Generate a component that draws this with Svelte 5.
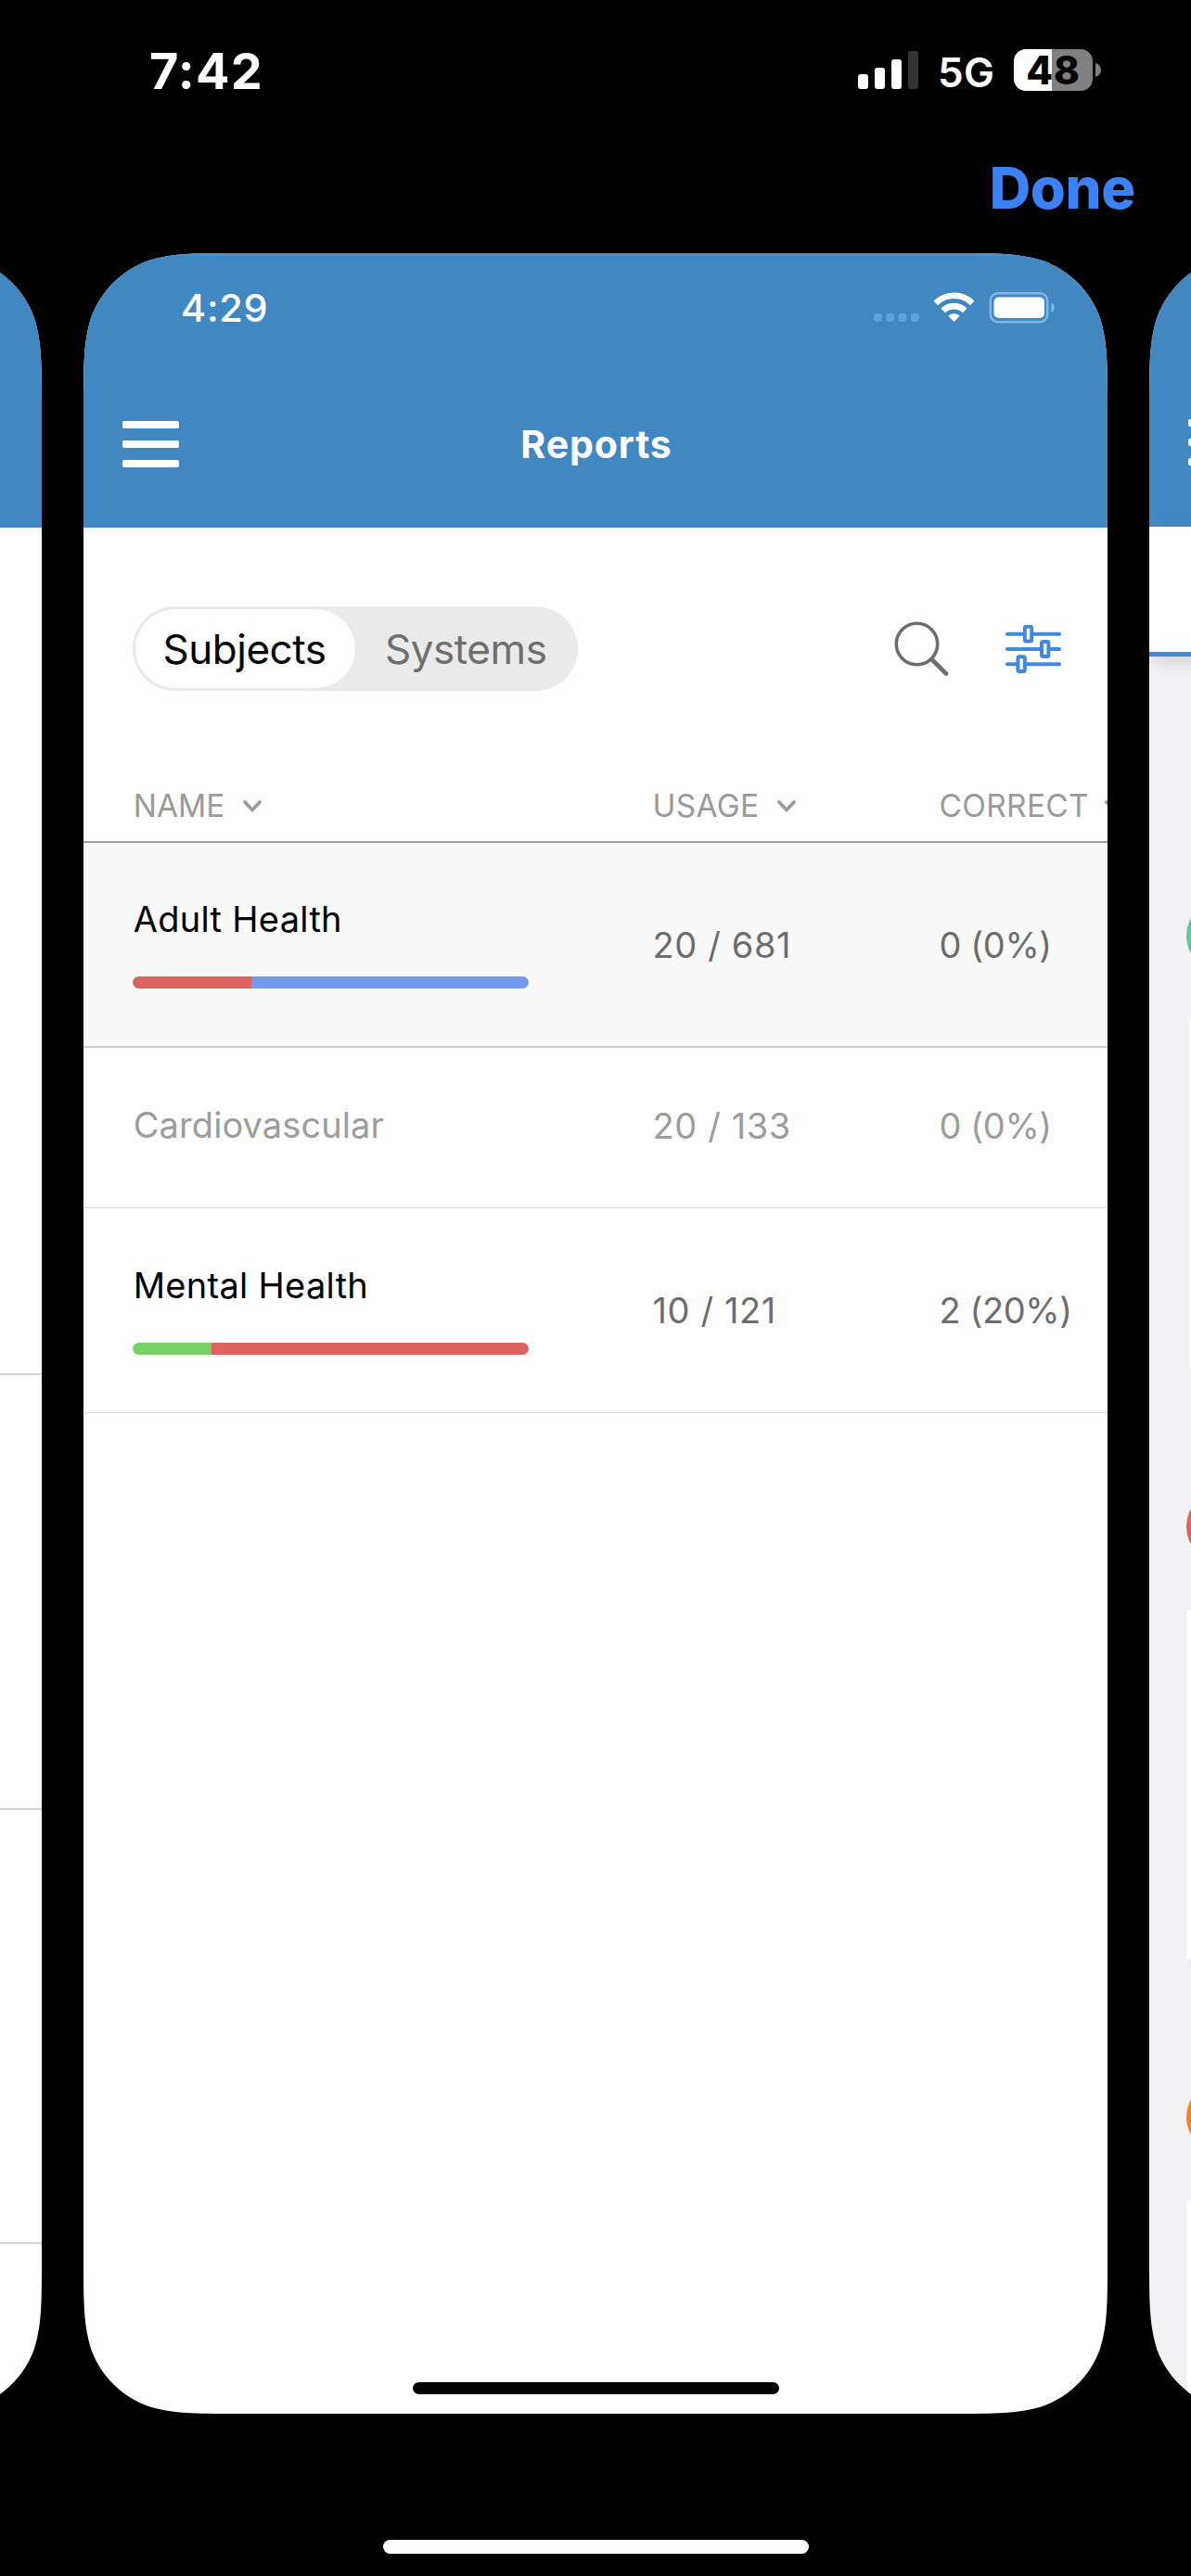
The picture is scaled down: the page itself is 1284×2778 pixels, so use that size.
<script>
  const columns = [
    { label: 'NAME', cls: 'h-name' },
    { label: 'USAGE', cls: 'h-usage' },
    { label: 'CORRECT', cls: 'h-correct' }
  ];

  const rows = [
    { name: 'Adult Health', usage: '20 / 681', correct: '0 (0%)', kind: 'shaded', bar: [['red', 30], ['blue', 70]] },
    { name: 'Cardiovascular', usage: '20 / 133', correct: '0 (0%)', kind: 'muted', bar: null },
    { name: 'Mental Health', usage: '10 / 121', correct: '2 (20%)', kind: '', bar: [['green', 20], ['red', 80]] }
  ];

  const feed = ['teal', 'red', 'orange'];
</script>

<div class="page">
  <header class="os-status">
    <span class="os-time">7:42</span>
    <div class="os-right">
      <svg class="signal" width="65" height="41" viewBox="0 0 65 41">
        <rect x="0" y="25" width="11" height="16" rx="3" fill="#fff" />
        <rect x="18" y="18" width="11" height="23" rx="3" fill="#fff" />
        <rect x="36" y="9" width="11" height="32" rx="3" fill="#fff" />
        <rect x="54" y="0" width="11" height="41" rx="3" fill="#333" />
      </svg>
      <span class="network">5G</span>
      <div class="charge"><span>48</span></div>
      <svg class="nub" width="6" height="15" viewBox="0 0 6 15"><path d="M0 0C4 1.5 6 4 6 7.5S4 13.500 0 15Z" fill="#808080" /></svg>
    </div>
  </header>

  <div class="actions"><button class="done">Done</button></div>

  <main class="carousel">
    <section class="shot">
      <div class="blue"></div>
      <div class="lined"><i></i><i></i><i></i></div>
    </section>

    <section class="shot">
      <div class="blue">
        <div class="app-status">
          <span class="app-time">4:29</span>
          <svg width="196" height="34" viewBox="0 0 196 34">
            <g fill="#5fa3d6">
              <rect x="0" y="23" width="9" height="9" rx="3" />
              <rect x="13.200" y="23" width="9" height="9" rx="3" />
              <rect x="26.400" y="23" width="9" height="9" rx="3" />
              <rect x="39.800" y="23" width="9" height="9" rx="3" />
            </g>
            <g fill="none" stroke="#fff" stroke-width="6.600">
              <path d="M66.800 11.900A28 28 0 0 1 106.200 11.900" />
              <path d="M74.700 19.900A17 17 0 0 1 98.300 19.900" />
            </g>
            <path d="M80.300 25.800A9 9 0 0 1 92.700 25.800L86.500 32Z" fill="#fff" />
            <rect x="125.800" y="1.200" width="61.400" height="31" rx="8" fill="none" stroke="#7fb8e6" stroke-width="2.400" />
            <rect x="129.500" y="5.500" width="54.500" height="22.500" rx="5" fill="#fff" />
            <path d="M191.300 11.500C193.700 12.500 194.800 14.300 194.800 16.700S193.700 21 191.300 22Z" fill="#7fb8e6" />
          </svg>
        </div>
        <div class="nav">
          <div class="burger"><i></i><i></i><i></i></div>
          <h1>Reports</h1>
        </div>
      </div>

      <div class="toolbar">
        <div class="segment">
          <span class="tab on">Subjects</span>
          <span class="tab off">Systems</span>
        </div>
        <svg class="search" width="60" height="60" viewBox="0 0 60 60" fill="none" stroke="#6d6d6d" stroke-linecap="round">
          <circle cx="24.500" cy="24.500" r="22.200" stroke-width="3.600" />
          <path d="M41 41.500L56 56.500" stroke-width="4.600" />
        </svg>
        <svg class="filter" width="60" height="52" viewBox="0 0 60 52" fill="#fff" stroke="#4189dc" stroke-width="4" stroke-linecap="round">
          <path d="M2 9.800H58M2 26H58M2 42.200H58" />
          <rect x="20.800" y="1.800" width="7.400" height="15.800" rx="1.500" />
          <rect x="39" y="18.100" width="7.400" height="15.800" rx="1.500" />
          <rect x="13.400" y="34.300" width="7.400" height="15.800" rx="1.500" />
        </svg>
      </div>

      <div class="grid head">
        {#each columns as c}
          <div class="th">
            <span class={c.cls}>{c.label}</span>
            <svg width="22" height="15" viewBox="0 0 22 15" fill="none" stroke="#9b9b9b" stroke-width="3.800" stroke-linecap="round" stroke-linejoin="round">
              <path d="M3 3L11 11.500L19 3" />
            </svg>
          </div>
        {/each}
      </div>

      {#each rows as r}
        <div class="grid row {r.kind}">
          <div class="name-cell">
            <span class="name">{r.name}</span>
            {#if r.bar}
              <div class="bar">
                {#each r.bar as [color, share]}
                  <i class={color} style="width: {share}%"></i>
                {/each}
              </div>
            {/if}
          </div>
          <span class="usage">{r.usage}</span>
          <span class="correct">{r.correct}</span>
        </div>
      {/each}

      <div class="home-inner"></div>
    </section>

    <section class="shot next">
      <div class="blue short">
        <div class="burger"><i></i><i></i><i></i></div>
      </div>
      <div class="tabs"></div>
      <div class="feed">
        {#each feed as color}
          <div class="entry {color}"><div class="dot"></div><div class="panel"></div></div>
        {/each}
      </div>
    </section>
  </main>

  <footer><div class="home-outer"></div></footer>
</div>

<style>
  :global(body) { margin: 0; background: #000; }
  .page {
    width: 1284px; height: 2778px; overflow: hidden; background: #000;
    display: flex; flex-direction: column;
    font-family: Inter, "Liberation Sans", sans-serif;
  }
  .os-status {
    height: 154px; box-sizing: border-box; padding: 0 97px 0 161px;
    display: flex; align-items: center; justify-content: space-between; color: #fff;
  }
  .os-time { font-size: 54px; line-height: 64px; margin-bottom: 1px; font-weight: 750; letter-spacing: 1.200px; }
  .os-right { display: flex; align-items: center; }
  .signal { margin-bottom: 3px; }
  .network { font-size: 44px; font-weight: 600; letter-spacing: 0.300px; width: 80px; margin-left: 21px; margin-top: 2px; }
  .charge {
    width: 85px; height: 45px; border-radius: 13px; margin: 0 3px 3px 2px;
    display: flex; align-items: center; justify-content: center;
    background: linear-gradient(90deg, #fff 41px, #808080 41px);
    color: #000; font-size: 42px; font-weight: 850; letter-spacing: 0.800px;
  }
  .nub { margin-bottom: 3px; }
  .actions { height: 119px; box-sizing: border-box; padding: 0 60px 22px 0; display: flex; align-items: center; justify-content: flex-end; }
  .done { border: 0; padding: 0; background: none; font: 800 61.500px Inter, sans-serif; color: #3b82f7; letter-spacing: -0.300px; }

  .carousel { height: 2330px; display: flex; justify-content: center; gap: 45px; }
  .shot {
    flex: none; width: 1104px; height: 2330px; background: #fff; position: relative;
    display: flex; flex-direction: column;
    clip-path: path("M168.15 0H935.85C984.27 0 1008.48 0 1034.54 8.24C1062.99 18.6 1085.4 41.01 1095.76 69.46C1104 95.52 1104 119.73 1104 168.15V2161.85C1104 2210.27 1104 2234.48 1095.76 2260.54C1085.4 2288.99 1062.99 2311.4 1034.54 2321.76C1008.48 2330 984.27 2330 935.85 2330H168.15C119.73 2330 95.52 2330 69.46 2321.76C41.01 2311.4 18.6 2288.99 8.24 2260.54C0 2234.48 0 2210.27 0 2161.85V168.15C0 119.73 0 95.52 8.24 69.46C18.6 41.01 41.01 18.6 69.46 8.24C95.52 0 119.73 0 168.15 0Z");
  }
  .blue { flex: none; height: 296px; background: #4188c3; color: #fff; box-shadow: inset 0 3px #4a8fc7; }
  .blue.short { height: 295px; display: flex; align-items: flex-start; box-sizing: border-box; padding: 179px 0 0 42px; }

  .lined i { display: block; height: 466.500px; border-bottom: 2px solid #d5d5d5; }
  .lined i:first-child { height: 912px; }

  .app-status { height: 118px; box-sizing: border-box; padding: 0 56px 0 105px; display: flex; align-items: center; justify-content: space-between; }
  .app-time { font-size: 41.500px; font-weight: 550; letter-spacing: 0.700px; }
  .nav { height: 175px; display: grid; grid-template-columns: 1fr auto 1fr; align-items: center; padding: 0 41.500px; }
  h1 { margin: 0; font-size: 41px; font-weight: 650; letter-spacing: 0.900px; padding-left: 2px; }
  .burger { display: flex; flex-direction: column; gap: 13px; width: 61px; }
  .burger i { height: 8px; border-radius: 2px; background: #fff; }

  .toolbar { display: flex; align-items: center; padding: 85px 50px 0 53px; height: 91px; }
  .segment { display: flex; width: 474px; height: 85px; padding: 3px; border-radius: 46px; background: #eaeaea; }
  .tab { display: flex; align-items: center; font-size: 44px; letter-spacing: -0.450px; }
  .on { width: 237px; justify-content: center; border-radius: 43px; background: #fff; color: #000; text-indent: -2px; }
  .off { padding-left: 32px; color: #6f6f6f; }
  .search { margin-left: auto; margin-right: 60px; }

  .grid { display: grid; grid-template-columns: 560px 309px 1fr; align-items: center; padding-left: 53px; box-sizing: border-box; flex: none; }
  .head { margin-top: 86px; height: 78px; border-bottom: 2px solid #9f9f9f; color: #9b9b9b; }
  .th { display: flex; align-items: center; gap: 18.500px; font-size: 33.500px; letter-spacing: 0; white-space: nowrap; }
  .th:last-child { gap: 15.500px; }
  .h-name, .name { padding-left: 0.700px; }
  .h-usage, .h-correct { letter-spacing: 0.300px; padding-left: 0.500px; }
  .row { height: 221px; border-bottom: 1.500px solid #dcdcdc; font-size: 38px; color: #6d6d6d; }
  .name-cell { display: flex; flex-direction: column; gap: 41px; }
  .name { line-height: 41px; color: #000; letter-spacing: 0.300px; }
  .usage { letter-spacing: 0.600px; padding-left: 0.500px; }
  .correct { letter-spacing: -0.400px; padding-left: 0.500px; }
  .shaded { background: #f9f9f9; border-bottom: 2px solid #cacaca; }
  .muted { height: 173px; padding-bottom: 5px; color: #9d9d9d; }
  .muted .name { color: #9d9d9d; letter-spacing: 0.100px; }
  .bar { display: flex; width: 427px; height: 13px; border-radius: 7px; overflow: hidden; }
  .bar i { display: block; }
  i.red { background: #dc6460; }
  i.blue { background: #7399ee; height: auto; box-shadow: none; }
  i.green { background: #7ad067; }

  .home-inner { margin: auto auto 21px; width: 395px; height: 13px; border-radius: 7px; background: #000; }

  .next { background: #f2f2f4; }
  .tabs { height: 135px; flex: none; background: #fff; border-bottom: 5px solid #4189dc; box-shadow: 6px 6px 16px rgba(90, 90, 120, 0.22); }
  .feed { padding: 262px 0 0 40px; display: flex; flex-direction: column; }
  .entry { height: 637px; flex: none; }
  .dot { width: 78px; height: 78px; border-radius: 50%; }
  .panel { margin-top: 51px; height: 377px; background: #fff; box-shadow: 5px 5px 7px rgba(0, 0, 0, 0.1); }
  .teal .dot { background: #60c9a0; }
  .teal .panel { margin-left: 3px; }
  .red .dot { background: #de625e; }
  .orange .dot { background: #e98632; }

  footer { flex: 1; display: flex; justify-content: center; align-items: flex-end; padding-bottom: 24px; }
  .home-outer { width: 459px; height: 15px; border-radius: 8px; background: #fff; }
</style>
